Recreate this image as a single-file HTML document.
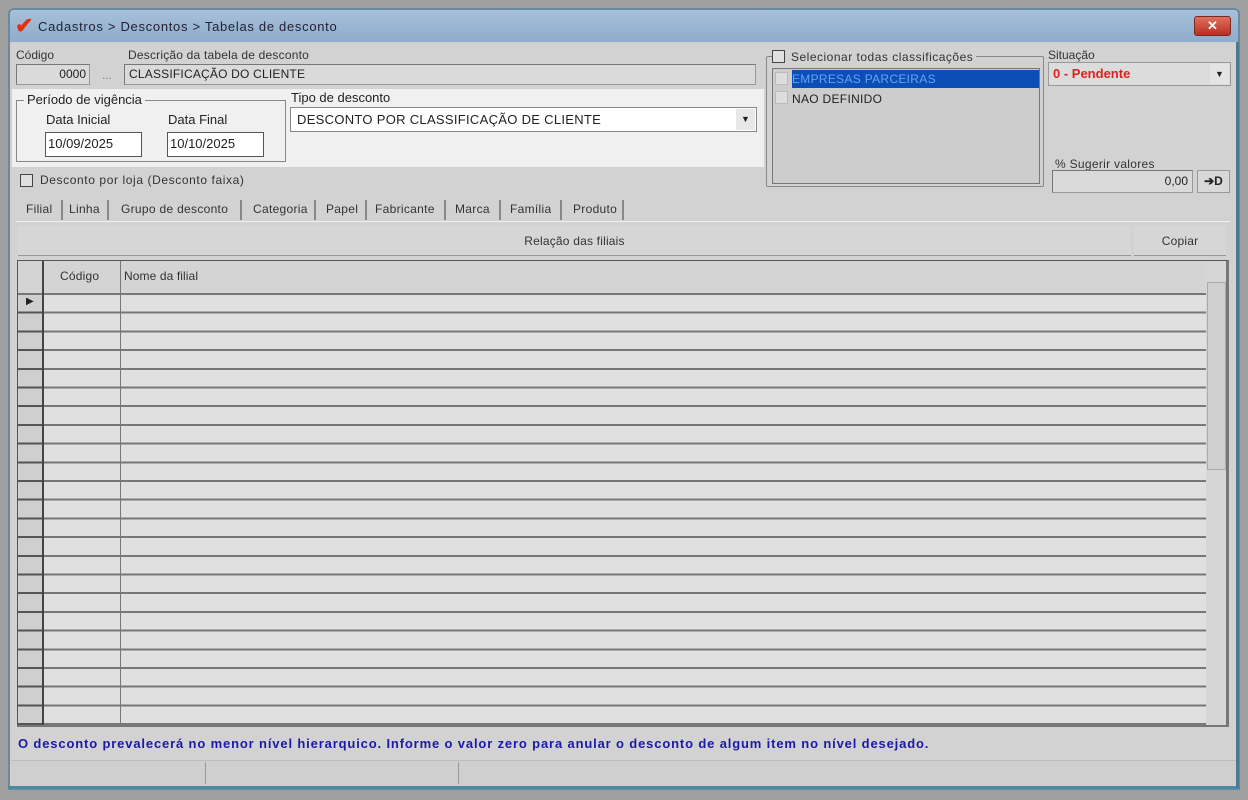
<!DOCTYPE html>
<html><head><meta charset="utf-8"><style>
*{margin:0;padding:0;box-sizing:border-box}
body{width:1248px;height:800px;background:#a0a0a0;position:relative;overflow:hidden;font-family:"Liberation Sans",sans-serif;font-size:12px;color:#222}
.a{position:absolute}
.win{left:8px;top:8px;width:1232px;height:782px;background:#d0d0d0;border:2px solid #6a8aa0;border-radius:6px 6px 0 0}
.title{left:10px;top:10px;width:1228px;height:32px;background:linear-gradient(#a8c0da,#8eaccb);border-radius:5px 5px 0 0}
.lbl{font-size:12px;color:#333;letter-spacing:0.5px}
.inp{background:#dadada;border:1px solid #999;border-top-color:#777;border-left-color:#777}
.w{background:#fff;border:1px solid #555}
.tab{position:absolute;top:202px;font-size:12px;color:#333;letter-spacing:0.3px}
.sep{position:absolute;top:200px;width:2px;height:20px;background:#888}
</style></head><body>
<div class="a win"></div>
<div class="a title"></div>
<div class="a" style="left:15px;top:15px;font-size:22px;color:#e03010;font-weight:bold;line-height:22px">✔</div>
<div class="a" style="left:38px;top:19px;font-size:13px;color:#223;letter-spacing:0.7px">Cadastros &gt; Descontos &gt; Tabelas de desconto</div>
<div class="a" style="left:1194px;top:16px;width:37px;height:20px;background:linear-gradient(#e07060,#b83020);border:1px solid #7a2a20;border-radius:3px;color:#fff;text-align:center;font-weight:bold;font-size:13px;line-height:18px">✕</div>

<div class="a" style="left:12px;top:44px;width:1224px;height:720px;background:#d2d2d2"></div>
<div class="a" style="left:12px;top:89px;width:752px;height:78px;background:#f0f0f0"></div>

<div class="a lbl" style="left:16px;top:48px;letter-spacing:0">Código</div>
<div class="a lbl" style="left:128px;top:48px;letter-spacing:0.2px">Descrição da tabela de desconto</div>
<div class="a inp" style="left:16px;top:64px;width:74px;height:21px;text-align:right;padding-right:3px;line-height:19px">0000</div>
<div class="a" style="left:94px;top:64px;width:26px;height:21px;text-align:center;color:#888;line-height:22px">...</div>
<div class="a inp" style="left:124px;top:64px;width:632px;height:21px;padding-left:4px;line-height:19px;letter-spacing:0.2px">CLASSIFICAÇÃO DO CLIENTE</div>

<div class="a" style="left:16px;top:100px;width:270px;height:62px;border:1px solid #888"></div>
<div class="a" style="left:24px;top:92px;background:#f0f0f0;padding:0 3px;font-size:13px">Período de vigência</div>
<div class="a" style="left:46px;top:112px;font-size:13px">Data Inicial</div>
<div class="a" style="left:168px;top:112px;font-size:13px">Data Final</div>
<div class="a w" style="left:45px;top:132px;width:97px;height:25px;padding-left:2px;line-height:22px;font-size:13px">10/09/2025</div>
<div class="a w" style="left:167px;top:132px;width:97px;height:25px;padding-left:2px;line-height:22px;font-size:13px">10/10/2025</div>

<div class="a" style="left:291px;top:90px;font-size:13px">Tipo de desconto</div>
<div class="a w" style="left:290px;top:107px;width:467px;height:25px;border-color:#888;padding-left:6px;line-height:23px;font-size:13px;letter-spacing:0.3px">DESCONTO POR CLASSIFICAÇÃO DE CLIENTE</div>
<div class="a" style="left:736px;top:109px;width:19px;height:21px;background:#e8e8e8;text-align:center;font-size:9px;line-height:21px">▼</div>

<div class="a" style="left:766px;top:56px;width:278px;height:131px;border:1px solid #888;border-radius:2px"></div>
<div class="a" style="left:772px;top:50px;background:#d2d2d2;padding:0 3px 0 0;font-size:12px;color:#333;letter-spacing:0.5px"><span style="display:inline-block;width:13px;height:13px;border:1px solid #444;background:#e0e0e0;vertical-align:-2px;margin-right:6px"></span>Selecionar todas classificações</div>
<div class="a" style="left:772px;top:68px;width:268px;height:116px;border:1px solid #777;background:#cdcdcd"></div>
<div class="a" style="left:792px;top:70px;width:247px;height:18px;background:#0a4fb8;color:#6aa0f0;line-height:18px;letter-spacing:0.3px">EMPRESAS PARCEIRAS</div>
<div class="a" style="left:775px;top:72px;width:13px;height:13px;background:#ddd;border:1px solid #bbb"></div>
<div class="a" style="left:775px;top:91px;width:13px;height:13px;background:#ddd;border:1px solid #bbb"></div>
<div class="a" style="left:792px;top:91px;line-height:16px;letter-spacing:0.3px">NAO DEFINIDO</div>

<div class="a lbl" style="left:1048px;top:48px;letter-spacing:0">Situação</div>
<div class="a" style="left:1048px;top:62px;width:183px;height:24px;background:#dcdcdc;border:1px solid #999;color:#e02020;font-weight:bold;font-size:13px;padding-left:4px;line-height:22px">0 - Pendente</div>
<div class="a" style="left:1210px;top:64px;width:19px;height:20px;background:#e4e4e4;font-size:9px;text-align:center;line-height:20px">▼</div>

<div class="a lbl" style="left:1055px;top:157px;letter-spacing:0.3px">% Sugerir valores</div>
<div class="a inp" style="left:1052px;top:170px;width:141px;height:23px;text-align:right;padding-right:4px;line-height:21px">0,00</div>
<div class="a" style="left:1197px;top:170px;width:33px;height:23px;border:1px solid #999;background:#d8d8d8;text-align:center;line-height:21px;font-weight:bold">➔D</div>

<div class="a" style="left:20px;top:174px;width:13px;height:13px;border:1px solid #444;background:#e0e0e0"></div>
<div class="a lbl" style="left:40px;top:173px;letter-spacing:0.6px">Desconto por loja (Desconto faixa)</div>

<div class="tab" style="left:26px">Filial</div><div class="sep" style="left:61px"></div>
<div class="tab" style="left:69px">Linha</div><div class="sep" style="left:107px"></div>
<div class="tab" style="left:121px">Grupo de desconto</div><div class="sep" style="left:240px"></div>
<div class="tab" style="left:253px">Categoria</div><div class="sep" style="left:314px"></div>
<div class="tab" style="left:326px">Papel</div><div class="sep" style="left:365px"></div>
<div class="tab" style="left:375px">Fabricante</div><div class="sep" style="left:444px"></div>
<div class="tab" style="left:455px">Marca</div><div class="sep" style="left:499px"></div>
<div class="tab" style="left:510px">Família</div><div class="sep" style="left:560px"></div>
<div class="tab" style="left:573px">Produto</div><div class="sep" style="left:622px"></div>
<div class="a" style="left:16px;top:221px;width:1214px;height:1px;background:#eee"></div>

<div class="a" style="left:18px;top:226px;width:1113px;height:30px;background:#d6d6d6;border-bottom:1px solid #999;text-align:center;line-height:30px"><span class="lbl" style="letter-spacing:0.2px">Relação das filiais</span></div>
<div class="a" style="left:1134px;top:226px;width:92px;height:30px;background:#d6d6d6;border-bottom:1px solid #999;text-align:center;line-height:30px"><span class="lbl" style="letter-spacing:0.2px">Copiar</span></div>

<div class="a" style="left:17px;top:260px;width:1212px;height:467px;border:1px solid #555;border-right:3px solid #777;border-bottom:3px solid #777;background:#dedede"></div>
<div class="a" style="left:18px;top:261px;width:1188px;height:34px;background:#d4d4d4"></div>
<div class="a" style="left:18px;top:295px;width:1188px;height:430px;background:repeating-linear-gradient(#e0e0e0 0,#e0e0e0 16.7px,#777 16.7px,#777 18.7px)"></div>
<div class="a" style="left:18px;top:293px;width:1188px;height:2px;background:#777"></div>
<div class="a" style="left:18px;top:295px;width:24px;height:430px;background:repeating-linear-gradient(#cfcfcf 0,#cfcfcf 16.7px,#555 16.7px,#555 18.7px)"></div>
<div class="a" style="left:42px;top:261px;width:2px;height:464px;background:#444"></div>
<div class="a" style="left:120px;top:261px;width:1px;height:464px;background:#777"></div>
<div class="a lbl" style="left:60px;top:269px;letter-spacing:0.2px">Código</div>
<div class="a lbl" style="left:124px;top:269px;letter-spacing:0.1px">Nome da filial</div>
<div class="a" style="left:26px;top:296px;font-size:10px">▶</div>
<div class="a" style="left:1206px;top:261px;width:20px;height:464px;background:#d6d6d6"></div>
<div class="a" style="left:1207px;top:282px;width:19px;height:188px;background:#d0d0d0;border:1px solid #aaa"></div>

<div class="a" style="left:18px;top:736px;color:#1a1aa8;font-weight:bold;font-size:13px;letter-spacing:0.85px;white-space:nowrap">O desconto prevalecerá no menor nível hierarquico. Informe o valor zero para anular o desconto de algum item no nível desejado.</div>

<div class="a" style="left:11px;top:760px;width:1226px;height:26px;background:#cfcfcf;border-top:1px solid #bbb"></div>
<div class="a" style="left:205px;top:762px;width:1px;height:22px;background:#999"></div>
<div class="a" style="left:458px;top:762px;width:1px;height:22px;background:#999"></div>
<div class="a" style="left:8px;top:786px;width:1232px;height:3px;background:#4a8aa0"></div>
<div class="a" style="left:1236px;top:42px;width:3px;height:746px;background:#4a7a90"></div>
</body></html>
